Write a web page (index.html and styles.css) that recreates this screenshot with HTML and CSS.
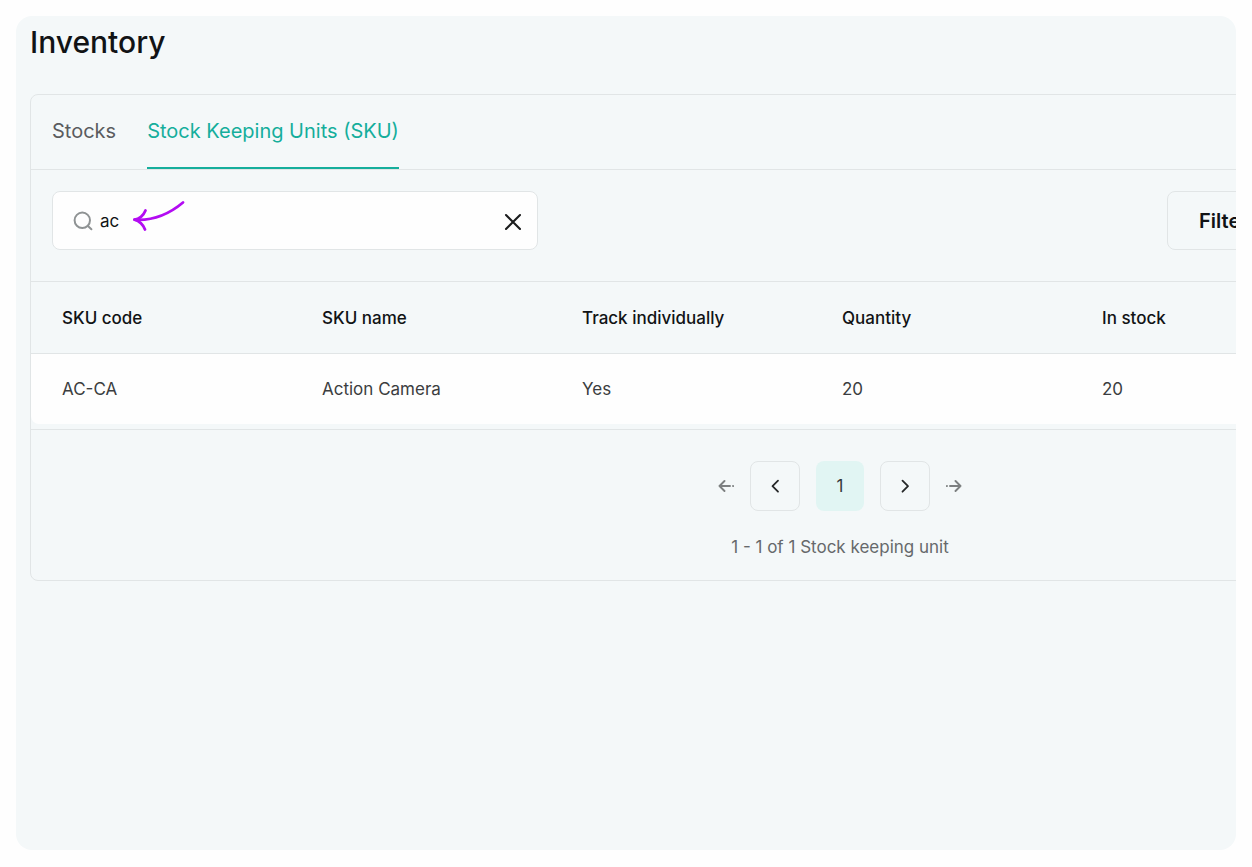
FILE: index.html
```html
<!DOCTYPE html>
<html lang="en">
<head>
<meta charset="utf-8">
<meta name="viewport" content="width=device-width, initial-scale=1">
<title>Inventory</title>
<link rel="stylesheet" href="styles.css">
</head>
<body>
<main class="frame">
  <h1 class="title">Inventory</h1>
  <section class="card">
    <nav class="tabs" aria-label="Inventory views">
      <a class="tab" href="#stocks">Stocks</a>
      <a class="tab tab-active" href="#sku" aria-current="page">Stock Keeping Units (SKU)</a>
    </nav>
    <div class="toolbar">
      <div class="search">
        <label class="search-label" for="search" aria-label="Search">
          <svg width="20" height="20" viewBox="0 0 20 20" fill="none" stroke="#8f9394" stroke-width="2" stroke-linecap="round"><circle cx="9.3" cy="9.3" r="7.7"/><path d="M15.2 15.2 18.4 18.2"/></svg>
        </label>
        <input class="search-input" id="search" type="text" value="ac">
        <button class="clear" type="button" aria-label="Clear search">
          <svg width="18" height="18" viewBox="0 0 18 18" fill="none" stroke="#1b1c1d" stroke-width="2.1" stroke-linecap="round"><path d="M2 2 16 16M16 2 2 16"/></svg>
        </button>
        <svg class="pointer" width="54" height="34" viewBox="0 0 54 34" fill="none" stroke="#b30cf2" stroke-width="2.8" stroke-linecap="round" stroke-linejoin="round"><path d="M51 4.500C38.500 15 22 23 2.500 21.700"/><path d="M13.500 12.500C11.500 17.500 7 21.500 2.500 21.700 7 23 11 26.500 13 31.500"/></svg>
      </div>
      <button class="filter" type="button">Filter</button>
    </div>
    <table class="grid">
      <thead>
        <tr><th>SKU code</th><th>SKU name</th><th>Track individually</th><th>Quantity</th><th>In stock</th><th></th></tr>
      </thead>
      <tbody>
        <tr><td>AC-CA</td><td>Action Camera</td><td>Yes</td><td>20</td><td>20</td><td></td></tr>
      </tbody>
    </table>
    <footer class="footer">
      <div class="pager">
        <button class="jump" type="button" aria-label="First page">
          <svg width="16" height="16" viewBox="0 0 16 16" fill="none" stroke="#7d8081" stroke-width="1.900" stroke-linecap="round" stroke-linejoin="round"><path d="M6.500 3 1.500 8 6.500 13M1.500 8H12M15 8H15.100"/></svg>
        </button>
        <button class="page" type="button" aria-label="Previous page">
          <svg width="16" height="16" viewBox="0 0 16 16" fill="none" stroke="#262829" stroke-width="1.800" stroke-linecap="round" stroke-linejoin="round"><path d="M11 2.700 5.500 8.200 11 13.700"/></svg>
        </button>
        <button class="page page-current" type="button" aria-current="page">1</button>
        <button class="page" type="button" aria-label="Next page">
          <svg width="16" height="16" viewBox="0 0 16 16" fill="none" stroke="#262829" stroke-width="1.800" stroke-linecap="round" stroke-linejoin="round"><path d="M5.500 2.700 11 8.200 5.500 13.700"/></svg>
        </button>
        <button class="jump" type="button" aria-label="Last page">
          <svg width="16" height="16" viewBox="0 0 16 16" fill="none" stroke="#7d8081" stroke-width="1.900" stroke-linecap="round" stroke-linejoin="round"><path d="M9.500 3 14.500 8 9.500 13M14.500 8H4M.900 8H1"/></svg>
        </button>
      </div>
      <p class="count">1 - 1 of 1 Stock keeping unit</p>
    </footer>
  </section>
</main>
</body>
</html>
```
FILE: styles.css
```css
* { box-sizing: border-box; }

body {
  margin: 0;
  padding: 16px 16px 17px;
  background: #fefefe;
  color: #111315;
  font-family: Inter, "Liberation Sans", sans-serif;
  font-size: 17px;
}

button, input { font: inherit; color: inherit; }
button { padding: 0; border: 0; background: none; }
svg { display: block; }

.frame {
  min-height: calc(100vh - 33px);
  padding: 4px 0 0 14px;
  overflow: hidden;
  border-radius: 16px;
  background: #f4f8f9;
}

.title {
  margin: 0 0 30px;
  font-size: 30px;
  font-weight: 500;
  line-height: 44px;
}

.card {
  min-width: 1620px;
  border: 1px solid #e1e5e6;
  border-radius: 8px;
}

.tabs {
  display: flex;
  gap: 31px;
  padding: 0 21px;
  border-bottom: 1px solid #e1e5e6;
}

.tab {
  padding: 21px 0;
  border-bottom: 2px solid transparent;
  color: #5a5c5f;
  font-size: 20px;
  line-height: 30px;
  text-decoration: none;
}

.tab-active { border-color: #15ae9c; color: #15ae9c; }

.toolbar {
  display: grid;
  grid-template-columns: 486px 461px;
  justify-content: space-between;
  padding: 21px 21px 31px;
  border-bottom: 1px solid #e1e5e6;
}

.search {
  position: relative;
  display: flex;
  align-items: center;
  gap: 7px;
  height: 59px;
  padding: 0 15px 0 20px;
  border: 1px solid #e1e5e6;
  border-radius: 8px;
  background: #fefefe;
}

.search-input {
  flex: 1;
  min-width: 0;
  height: 40px;
  padding: 0;
  border: 0;
  outline: 0;
  background: transparent;
}

.clear { padding: 3px 0 0; }

.pointer { position: absolute; left: 79px; top: 6px; }

.filter {
  justify-self: start;
  height: 59px;
  padding: 0 31px;
  border: 1px solid #e1e5e6;
  border-radius: 8px;
  font-size: 20px;
  font-weight: 600;
}

.grid {
  width: 100%;
  margin-bottom: 5px;
  border-collapse: separate;
  border-spacing: 0;
  table-layout: fixed;
}

.grid th, .grid td {
  padding: 0 0 0 31px;
  text-align: left;
}

.grid th {
  width: 260px;
  height: 72px;
  border-bottom: 1px solid #e1e5e6;
  font-weight: 500;
}

.grid th:last-child { width: auto; }

.grid td { height: 70px; background: #fefefe; color: #3b3d40; }
.grid td:first-child { border-bottom-left-radius: 8px; }
.grid td:last-child { border-bottom-right-radius: 8px; }

.footer {
  padding: 31px 0 21px;
  border-top: 1px solid #e1e5e6;
}

.pager {
  display: flex;
  justify-content: center;
  align-items: center;
  gap: 16px;
}

.page {
  display: grid;
  place-items: center;
  width: 50px;
  height: 50px;
  border: 1px solid #e1e5e6;
  border-radius: 8px;
}

.page-current {
  width: 48px;
  border: 0;
  background: #e1f5f3;
  color: #36393b;
}

.count {
  margin: 24px 0 0;
  color: #66696b;
  line-height: 24px;
  text-align: center;
}
```
